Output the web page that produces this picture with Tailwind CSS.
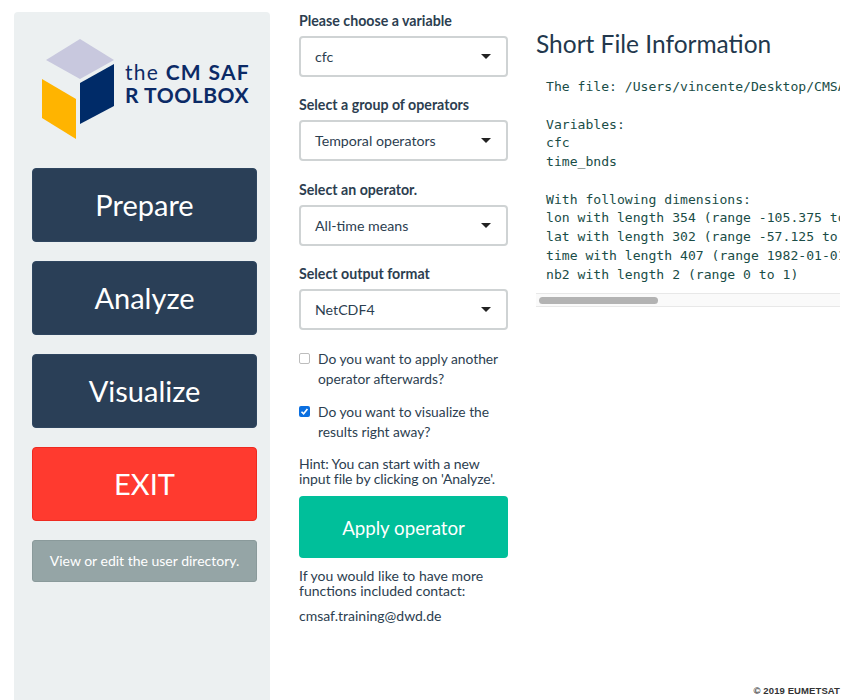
<!DOCTYPE html>
<html>
<head>
<meta charset="utf-8">
<script src="https://cdn.jsdelivr.net/npm/@tailwindcss/browser@4"></script>
</head>
<body class="bg-white">
<div class="relative w-[850px] h-[700px] overflow-hidden flex font-['Lato','sans-serif'] text-[#2c3e50]">
  <aside class="ml-[14px] mt-3 w-[256px] h-[688px] shrink-0 bg-[#ecf0f1] rounded-t-[4px] pl-[18px] pr-[13px]">
    <div class="relative h-[156px]">
      <svg class="absolute left-[10px] top-[27px]" width="80" height="104" viewBox="0 0 80 104">
        <polygon points="4,21 38,0 72,21 38,40" fill="#c8c8de"/>
        <polygon points="38,44 72,25 72,67 38,85" fill="#002b68"/>
        <polygon points="0,40 34,60 34,100 0,79" fill="#ffb400"/>
      </svg>
      <div class="absolute left-[93px] top-[48px] text-[#0b2a66] leading-[23px] whitespace-nowrap font-bold">
        <div class="text-[21px] tracking-[1.3px]"><span class="font-normal">the</span> CM SAF</div>
        <div class="text-[21px] tracking-[0.55px]">R TOOLBOX</div>
      </div>
    </div>
    <div class="flex flex-col gap-[19px]">
      <button class="h-[74px] rounded-[4px] bg-[#2a3f57] border border-[#2f4660] text-white text-[29px]">Prepare</button>
      <button class="h-[74px] rounded-[4px] bg-[#2a3f57] border border-[#2f4660] text-white text-[29px]">Analyze</button>
      <button class="h-[74px] rounded-[4px] bg-[#2a3f57] border border-[#2f4660] text-white text-[29px]">Visualize</button>
      <button class="h-[74px] rounded-[4px] bg-[#ff3a2f] border border-[#ee2a20] text-white text-[29px]">EXIT</button>
      <button class="h-[42px] rounded-[3px] bg-[#95a5a6] border border-[#8a9a9b] text-white text-[14px] pb-[2px]">View or edit the user directory.</button>
    </div>
  </aside>

  <main class="ml-[29px] w-[209px] shrink-0 pt-3 text-[#2c3e50]">
    <label class="block font-bold text-[14.2px] leading-[18px]">Please choose a variable</label>
    <div class="mt-[6px] h-[41px] border-2 border-[#cfd3d4] rounded-[4px] flex items-center justify-between pl-[14px] pr-[15px] text-[14.2px]"><span>cfc</span><span class="w-0 h-0 border-x-[5.5px] border-x-transparent border-t-[5px] border-t-[#222]"></span></div>
    <label class="block mt-[19.4px] font-bold text-[14.2px] leading-[18px]">Select a group of operators</label>
    <div class="mt-[6px] h-[41px] border-2 border-[#cfd3d4] rounded-[4px] flex items-center justify-between pl-[14px] pr-[15px] text-[14.2px]"><span>Temporal operators</span><span class="w-0 h-0 border-x-[5.5px] border-x-transparent border-t-[5px] border-t-[#222]"></span></div>
    <label class="block mt-[19.4px] font-bold text-[14.2px] leading-[18px]">Select an operator.</label>
    <div class="mt-[6px] h-[41px] border-2 border-[#cfd3d4] rounded-[4px] flex items-center justify-between pl-[14px] pr-[15px] text-[14.2px]"><span>All-time means</span><span class="w-0 h-0 border-x-[5.5px] border-x-transparent border-t-[5px] border-t-[#222]"></span></div>
    <label class="block mt-[19.4px] font-bold text-[14.2px] leading-[18px]">Select output format</label>
    <div class="mt-[6px] h-[41px] border-2 border-[#cfd3d4] rounded-[4px] flex items-center justify-between pl-[14px] pr-[15px] text-[14.2px]"><span>NetCDF4</span><span class="w-0 h-0 border-x-[5.5px] border-x-transparent border-t-[5px] border-t-[#222]"></span></div>

    <div class="mt-[19px] flex text-[13.8px] leading-[20px]">
      <span class="mt-[4px] w-[11px] h-[11px] border border-[#bdbdbd] rounded-[2px] bg-white shrink-0"></span>
      <span class="ml-[8px]">Do you want to apply another operator afterwards?</span>
    </div>
    <div class="mt-[13px] flex text-[13.8px] leading-[20px]">
      <span class="mt-[4px] w-[11px] h-[11px] rounded-[2px] bg-[#0b6fe0] shrink-0 flex items-center justify-center">
        <svg width="9" height="9" viewBox="0 0 9 9"><path d="M1.5 4.7 L3.6 6.8 L7.4 2" fill="none" stroke="#fff" stroke-width="1.6"/></svg>
      </span>
      <span class="ml-[8px]">Do you want to visualize the results right away?</span>
    </div>
    <p class="mt-[14px] text-[14px] leading-[15px] whitespace-nowrap tracking-[-0.1px]">Hint: You can start with a new<br>input file by clicking on 'Analyze'.</p>
    <button class="mt-[10px] w-full h-[62px] rounded-[4px] bg-[#00bf9a] text-white text-[18.7px] pt-[2px]">Apply operator</button>
    <p class="mt-[10px] text-[14px] leading-[15px] whitespace-nowrap">If you would like to have more<br>functions included contact:</p>
    <p class="mt-[8px] text-[14px] leading-[20px]">cmsaf.training@dwd.de</p>
  </main>

  <section class="ml-[28px] w-[304px] shrink-0 pt-[28px]">
    <h2 class="text-[24.5px] leading-[32px] whitespace-nowrap text-[#22384d]">Short File Information</h2>
    <div class="mt-[10px] overflow-hidden">
      <pre class="px-[10px] pt-[8px] h-[224px] overflow-hidden font-['DejaVu_Sans_Mono','monospace'] text-[13.1px] leading-[18.75px] text-[#1a4d47]">The file: /Users/vincente/Desktop/CMSAF/data.nc

Variables:
cfc
time_bnds

With following dimensions:
lon with length 354 (range -105.375 to 70)
lat with length 302 (range -57.125 to 70)
time with length 407 (range 1982-01-01 to 2015)
nb2 with length 2 (range 0 to 1)</pre>
      <div class="h-[14px] -mt-[1px] bg-[#fafafa] border-y border-[#e8e8e8] flex items-center px-[3px]">
        <div class="w-[119px] h-[7px] rounded-full bg-[#b3b3b3]"></div>
      </div>
    </div>
  </section>

  <div class="absolute right-[10px] bottom-[4px] text-[9.5px] leading-[11px] font-bold font-['Liberation_Sans','sans-serif'] text-[#333] tracking-[0.1px]">© 2019 EUMETSAT</div>
</div>
</body>
</html>
